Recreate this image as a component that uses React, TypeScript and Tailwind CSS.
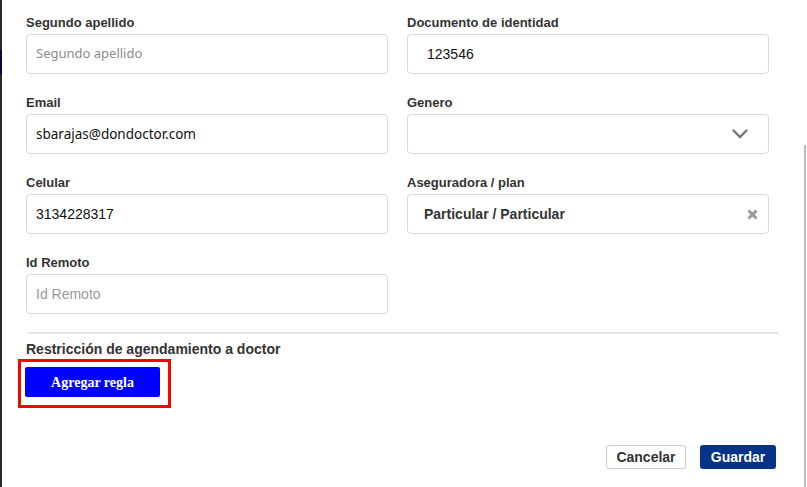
import React from "react";

const label = "mb-[2px] block text-[13px] font-bold leading-[18px] text-[#333]";
const box =
  "flex h-[40px] items-center rounded-[4px] border border-[#d9d9d9] bg-white";

function Field({ title, children }: { title: string; children: React.ReactNode }) {
  return (
    <div className="flex flex-col">
      <span className={label}>{title}</span>
      {children}
    </div>
  );
}

export default function App() {
  return (
    <div
      className="relative h-[487px] w-[807px] overflow-hidden bg-white"
      style={{ fontFamily: '"Liberation Sans", Arial, sans-serif' }}
    >
      {/* window edges */}
      <div className="absolute left-0 top-0 bottom-0 w-[2px] bg-[#2b2b2b]" />
      <div className="absolute left-0 top-[50px] h-[25px] w-[2px] bg-[#0b0b3a]" />
      <div className="absolute right-[1px] top-[145px] bottom-0 w-[2px] bg-[#bdbdbd]" />

      <div className="flex h-full flex-col pl-[26px] pr-[29px] pt-[14px]">
        <div className="grid grid-cols-[362px_362px] gap-x-[19px] gap-y-[20px]">
          <Field title="Segundo apellido">
            <div className={box}>
              <span className="pl-[9px] text-[13px] text-[#8c8c8c]" style={{ fontFamily: '"Noto Sans", sans-serif' }}>
                Segundo apellido
              </span>
            </div>
          </Field>
          <Field title="Documento de identidad">
            <div className={box}>
              <span className="pl-[19px] text-[14px] text-[#111]">123546</span>
            </div>
          </Field>

          <Field title="Email">
            <div className={box}>
              <span className="pl-[9px] text-[13.5px] text-[#111]" style={{ fontFamily: '"Noto Sans", sans-serif' }}>
                sbarajas@dondoctor.com
              </span>
            </div>
          </Field>
          <Field title="Genero">
            <div className={`${box} justify-end pr-[20px]`}>
              <svg width="16" height="10" viewBox="0 0 16 10" fill="none">
                <path d="M1.5 1.5 L8 8 L14.5 1.5" stroke="#777" strokeWidth="2.4" strokeLinecap="round" />
              </svg>
            </div>
          </Field>

          <Field title="Celular">
            <div className={box}>
              <span className="pl-[9px] text-[14px] text-[#111]">3134228317</span>
            </div>
          </Field>
          <Field title="Aseguradora / plan">
            <div className={`${box} justify-between pl-[16px] pr-[10px]`}>
              <span className="text-[14px] font-bold text-[#333]">Particular / Particular</span>
              <svg width="11" height="11" viewBox="0 0 11 11">
                <path d="M1.5 1.5 L9.5 9.5 M9.5 1.5 L1.5 9.5" stroke="#999" strokeWidth="3" />
              </svg>
            </div>
          </Field>

          <Field title="Id Remoto">
            <div className={box}>
              <span className="pl-[9px] text-[14px] text-[#999]">Id Remoto</span>
            </div>
          </Field>
        </div>

        <div className="ml-[2px] mt-[18px] h-[2px] w-[750px] bg-[#e6e6e6]" />

        <h3 className="mt-[6px] text-[14px] font-bold leading-[18px] text-[#333]">
          Restricción de agendamiento a doctor
        </h3>

        <div className="-ml-[8px] mt-[1px] flex h-[49px] w-[153px] items-start border-[3px] border-[#ff0000] pl-[4px] pt-[5px]">
          <button
            className="h-[30px] w-[135px] rounded-[2px] bg-[#0000ff] text-[14px] font-bold text-white"
            style={{ fontFamily: '"Liberation Serif", serif' }}
          >
            Agregar regla
          </button>
        </div>

        <div className="mt-auto mb-[18px] flex justify-end gap-[14px] pr-[2px]">
          <button className="h-[24px] w-[80px] rounded-[3px] border border-[#cccccc] bg-white text-[14px] font-bold text-[#333]">
            Cancelar
          </button>
          <button className="h-[24px] w-[76px] rounded-[3px] bg-[#043387] text-[14px] font-bold text-white">
            Guardar
          </button>
        </div>
      </div>
    </div>
  );
}
